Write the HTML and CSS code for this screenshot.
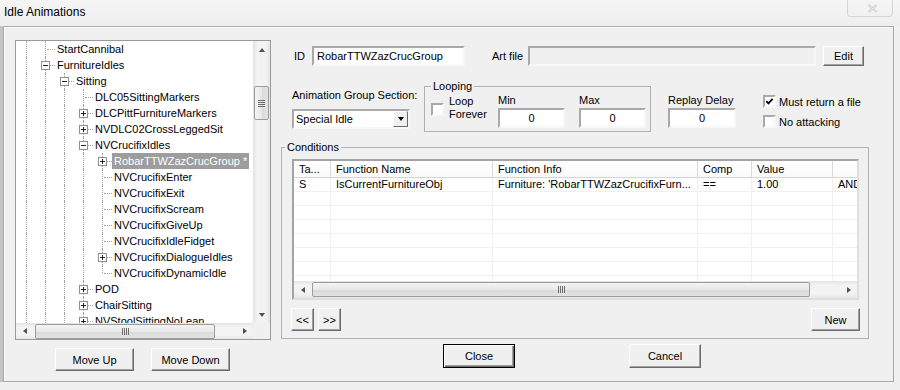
FILE: index.html
```html
<!DOCTYPE html>
<html lang="en">
<head>
    <meta charset="UTF-8">
    <title>Idle Animations</title>
    <link rel="stylesheet" href="styles.css">
</head>
<body>

<div class="titlebar">
    <span class="title">Idle Animations</span>
    <span class="close-x">
        <svg width="11" height="9" viewBox="0 0 11 9"><path d="M1.5 1 9.5 8M9.5 1 1.5 8" stroke="#c9c9c9" stroke-width="2.2" fill="none"/><path d="M1.5 1 9.5 8M9.5 1 1.5 8" stroke="#f7f7f7" stroke-width="0.8" fill="none"/></svg>
    </span>
</div>

<div class="frame">
    <div class="left">
        <div class="tree">
            <div class="tree-view">
                <div class="node"><i class="g l"></i><i class="g t"></i><span class="lbl">StartCannibal</span></div>
                <div class="node"><i class="g l"></i><i class="g t"><b class="box"></b></i><span class="lbl">FurnitureIdles</span></div>
                <div class="node"><i class="g l"></i><i class="g l"></i><i class="g t"><b class="box"></b></i><span class="lbl">Sitting</span></div>
                <div class="node"><i class="g l"></i><i class="g l"></i><i class="g l"></i><i class="g t"></i><span class="lbl">DLC05SittingMarkers</span></div>
                <div class="node"><i class="g l"></i><i class="g l"></i><i class="g l"></i><i class="g t"><b class="box plus"></b></i><span class="lbl">DLCPittFurnitureMarkers</span></div>
                <div class="node"><i class="g l"></i><i class="g l"></i><i class="g l"></i><i class="g t"><b class="box plus"></b></i><span class="lbl">NVDLC02CrossLeggedSit</span></div>
                <div class="node"><i class="g l"></i><i class="g l"></i><i class="g l"></i><i class="g t"><b class="box"></b></i><span class="lbl">NVCrucifixIdles</span></div>
                <div class="node sel"><i class="g l"></i><i class="g l"></i><i class="g l"></i><i class="g l"></i><i class="g t"><b class="box plus"></b></i><span class="lbl">RobarTTWZazCrucGroup *</span></div>
                <div class="node"><i class="g l"></i><i class="g l"></i><i class="g l"></i><i class="g l"></i><i class="g t"></i><span class="lbl">NVCrucifixEnter</span></div>
                <div class="node"><i class="g l"></i><i class="g l"></i><i class="g l"></i><i class="g l"></i><i class="g t"></i><span class="lbl">NVCrucifixExit</span></div>
                <div class="node"><i class="g l"></i><i class="g l"></i><i class="g l"></i><i class="g l"></i><i class="g t"></i><span class="lbl">NVCrucifixScream</span></div>
                <div class="node"><i class="g l"></i><i class="g l"></i><i class="g l"></i><i class="g l"></i><i class="g t"></i><span class="lbl">NVCrucifixGiveUp</span></div>
                <div class="node"><i class="g l"></i><i class="g l"></i><i class="g l"></i><i class="g l"></i><i class="g t"></i><span class="lbl">NVCrucifixIdleFidget</span></div>
                <div class="node"><i class="g l"></i><i class="g l"></i><i class="g l"></i><i class="g l"></i><i class="g t"><b class="box plus"></b></i><span class="lbl">NVCrucifixDialogueIdles</span></div>
                <div class="node"><i class="g l"></i><i class="g l"></i><i class="g l"></i><i class="g l"></i><i class="g e"></i><span class="lbl">NVCrucifixDynamicIdle</span></div>
                <div class="node"><i class="g l"></i><i class="g l"></i><i class="g l"></i><i class="g t"><b class="box plus"></b></i><span class="lbl">POD</span></div>
                <div class="node"><i class="g l"></i><i class="g l"></i><i class="g l"></i><i class="g t"><b class="box plus"></b></i><span class="lbl">ChairSitting</span></div>
                <div class="node"><i class="g l"></i><i class="g l"></i><i class="g l"></i><i class="g t"><b class="box plus"></b></i><span class="lbl">NVStoolSittingNoLean</span></div>
            </div>
            <div class="vscroll">
                <span class="sb-arrow"><i class="tri-up"></i></span>
                <span class="vthumb"><i class="vgrip"></i></span>
                <span class="sb-arrow end"><i class="tri-down"></i></span>
            </div>
            <div class="hscroll">
                <span class="sb-arrow"><i class="tri-left"></i></span>
                <span class="hthumb tree-thumb"><i class="hgrip"></i></span>
                <span class="sb-arrow end"><i class="tri-right"></i></span>
            </div>
            <div class="corner"></div>
        </div>
        <div class="move-row">
            <button class="btn b-move">Move Up</button>
            <button class="btn b-move">Move Down</button>
        </div>
    </div>

    <div class="right">
        <div class="row-id">
            <span class="lab-id">ID</span>
            <div class="field w-id">RobarTTWZazCrucGroup</div>
            <span class="lab-art">Art file</span>
            <div class="field w-art off"></div>
            <button class="btn b-edit">Edit</button>
        </div>

        <div class="row-opts">
            <div class="agroup">
                <div class="cap">Animation Group Section:</div>
                <div class="field select"><span>Special Idle</span><i class="drop"></i></div>
            </div>
            <fieldset class="group looping">
                <legend>Looping</legend>
                <div class="loop-body">
                    <div class="loop-check"><span class="cb"></span><span class="two">Loop<br>Forever</span></div>
                    <div class="spin"><div class="cap">Min</div><div class="field num">0</div></div>
                    <div class="spin gap"><div class="cap">Max</div><div class="field num">0</div></div>
                </div>
            </fieldset>
            <div class="replay">
                <div class="cap">Replay Delay</div>
                <div class="field num">0</div>
            </div>
            <div class="flags">
                <div class="flag"><span class="cb"><svg width="9" height="9" viewBox="0 0 9 9"><path d="M1.3 4.2 3.4 6.4 7.6 1.8" fill="none" stroke="#000" stroke-width="1.9"/></svg></span>Must return a file</div>
                <div class="flag"><span class="cb"></span>No attacking</div>
            </div>
        </div>

        <fieldset class="group conditions">
            <legend>Conditions</legend>
            <div class="cond-body">
                <div class="list">
                    <div class="lv-view">
                        <div class="lv-head">
                            <span>Ta...</span><span>Function Name</span><span>Function Info</span><span>Comp</span><span>Value</span><span></span>
                        </div>
                        <div class="lv-row">
                            <span>S</span><span>IsCurrentFurnitureObj</span><span>Furniture: 'RobarTTWZazCrucifixFurn...</span><span>==</span><span>1.00</span><span>AND</span>
                        </div>
                        <div class="lv-row"><span></span><span></span><span></span><span></span><span></span><span></span></div>
                        <div class="lv-row"><span></span><span></span><span></span><span></span><span></span><span></span></div>
                        <div class="lv-row"><span></span><span></span><span></span><span></span><span></span><span></span></div>
                        <div class="lv-row"><span></span><span></span><span></span><span></span><span></span><span></span></div>
                        <div class="lv-row"><span></span><span></span><span></span><span></span><span></span><span></span></div>
                        <div class="lv-row"><span></span><span></span><span></span><span></span><span></span><span></span></div>
                        <div class="lv-row"><span></span><span></span><span></span><span></span><span></span><span></span></div>
                    </div>
                    <div class="hscroll">
                        <span class="sb-arrow"><i class="tri-left"></i></span>
                        <span class="hthumb list-thumb"><i class="hgrip"></i></span>
                        <span class="sb-arrow end"><i class="tri-right"></i></span>
                    </div>
                </div>
                <div class="cond-btns">
                    <button class="btn b-nav first">&lt;&lt;</button>
                    <button class="btn b-nav">&gt;&gt;</button>
                    <button class="btn b-new">New</button>
                </div>
            </div>
        </fieldset>

        <div class="row-close">
            <button class="btn default b-wide">Close</button>
            <button class="btn b-wide">Cancel</button>
        </div>
    </div>
</div>

</body>
</html>
```

FILE: styles.css
```css
* {
    box-sizing: border-box;
}
body {
    margin: 0;
    width: 900px;
    height: 390px;
    overflow: hidden;
    background-color: #f0f0f0;
    font-family: "Liberation Sans", Arial, sans-serif;
    font-size: 11px;
    color: #000;
}

/* title bar */
.titlebar {
    height: 26px;
    display: flex;
    justify-content: space-between;
    align-items: flex-start;
    background: linear-gradient(#f5f5f5, #eeeeee);
}
.title {
    font-size: 12px;
    line-height: 16px;
    padding: 4px 0 0 4px;
}
.close-x {
    width: 46px;
    height: 17px;
    margin-right: 7px;
    border: 1px solid #d6d6d6;
    border-top: none;
    border-radius: 0 0 4px 4px;
    display: flex;
    align-items: center;
    justify-content: center;
    padding-left: 4px;
}

/* main frame */
.frame {
    margin-left: 3px;
    width: 891px;
    height: 356px;
    border: 1px solid #a9a9a9;
    box-shadow: -3px 0 0 #c4c4c4, inset 1px 1px #fff;
    display: flex;
}
.left {
    width: 276px;
    flex-shrink: 0;
    padding: 13px 0 0 11px;
}
.right {
    flex: 1;
    display: flex;
    flex-direction: column;
}

/* tree view */
.tree {
    width: 256px;
    height: 300px;
    border: 1px solid #9a9a9a;
    background: #fff;
    display: grid;
    grid-template-columns: 1fr 17px;
    grid-template-rows: 1fr 16px;
}
.tree-view {
    overflow: hidden;
    padding-left: 1px;
}
.node {
    display: flex;
    height: 16px;
    line-height: 16px;
    white-space: nowrap;
}
.g {
    display: block;
    position: relative;
    width: 19px;
    height: 16px;
    flex-shrink: 0;
}
.g.l::before, .g.t::before, .g.e::before {
    content: "";
    position: absolute;
    left: 9px;
    top: 0;
    bottom: 0;
    border-left: 1px dotted #a0a0a0;
}
.g.e::before {
    bottom: 8px;
}
.g.t::after, .g.e::after {
    content: "";
    position: absolute;
    left: 11px;
    right: 0;
    top: 8px;
    border-top: 1px dotted #a0a0a0;
}
.box {
    position: absolute;
    left: 5px;
    top: 4px;
    width: 9px;
    height: 9px;
    border: 1px solid #8f8f8f;
    background: #fff;
    z-index: 1;
}
.box::before {
    content: "";
    position: absolute;
    left: 1px;
    top: 3px;
    width: 5px;
    height: 1px;
    background: #222;
}
.box.plus::after {
    content: "";
    position: absolute;
    left: 3px;
    top: 1px;
    width: 1px;
    height: 5px;
    background: #222;
}
.lbl {
    padding: 0 2px;
}
.node.sel .lbl {
    background: #9d9d9d;
    color: #fff;
}

/* scroll bars */
.vscroll {
    display: flex;
    flex-direction: column;
    align-items: center;
    background: linear-gradient(90deg, #e3e3e3, #f3f3f3 25%, #f3f3f3 75%, #e6e6e6);
}
.hscroll {
    display: flex;
    align-items: center;
    background: linear-gradient(#e3e3e3, #f3f3f3 25%, #f3f3f3 75%, #e6e6e6);
}
.corner {
    background: #f0f0f0;
}
.sb-arrow {
    width: 17px;
    height: 17px;
    flex-shrink: 0;
    display: flex;
    align-items: center;
    justify-content: center;
}
.vscroll .sb-arrow.end {
    margin-top: auto;
}
.hscroll .sb-arrow.end {
    margin-left: auto;
}
.tri-up, .tri-down, .tri-left, .tri-right {
    display: block;
    width: 0;
    height: 0;
}
.tri-up {
    border-left: 3px solid transparent;
    border-right: 3px solid transparent;
    border-bottom: 4px solid #505050;
}
.tri-down {
    border-left: 3px solid transparent;
    border-right: 3px solid transparent;
    border-top: 4px solid #505050;
}
.tri-left {
    border-top: 3px solid transparent;
    border-bottom: 3px solid transparent;
    border-right: 4px solid #505050;
}
.tri-right {
    border-top: 3px solid transparent;
    border-bottom: 3px solid transparent;
    border-left: 4px solid #505050;
}
.vthumb {
    width: 15px;
    height: 34px;
    margin-top: 28px;
    border: 1px solid #9b9b9b;
    border-radius: 2px;
    background: linear-gradient(90deg, #f4f4f4, #e8e8e8 50%, #dadada 51%, #e2e2e2);
    display: flex;
    align-items: center;
    justify-content: center;
}
.vgrip {
    display: block;
    width: 7px;
    height: 7px;
    background: repeating-linear-gradient(#6e6e6e 0 1px, transparent 1px 2px);
}
.hthumb {
    height: 15px;
    border: 1px solid #9b9b9b;
    border-radius: 2px;
    background: linear-gradient(#f4f4f4, #e8e8e8 50%, #dadada 51%, #e2e2e2);
    display: flex;
    align-items: center;
    justify-content: center;
}
.hgrip {
    display: block;
    width: 7px;
    height: 7px;
    background: repeating-linear-gradient(90deg, #6e6e6e 0 1px, transparent 1px 2px);
}
.tree-thumb {
    width: 180px;
    margin-left: 2px;
}
.list-thumb {
    width: 498px;
    margin-left: 1px;
}

/* buttons */
.btn {
    font: inherit;
    color: #000;
    background: #f0f0f0;
    border: 1px solid;
    border-color: #fff #6b6b6b #6b6b6b #fff;
    box-shadow: inset -1px -1px #a0a0a0;
    padding: 0;
    height: 23px;
}
.btn.default {
    border-color: #000;
    box-shadow: inset 1px 1px #fff, inset -1px -1px #6b6b6b, inset -2px -2px #a0a0a0;
}
.move-row {
    display: flex;
    gap: 17px;
    margin: 8px 0 0 40px;
}
.b-move {
    width: 79px;
}
.b-edit {
    width: 41px;
    height: 20px;
    margin-left: 7px;
}

/* inputs */
.field {
    height: 20px;
    border: 2px solid;
    border-color: #a9a9a9 #f7f7f7 #f7f7f7 #a9a9a9;
    background: #fff;
    line-height: 16px;
    padding-left: 3px;
    white-space: nowrap;
    overflow: hidden;
}
.field.off {
    background: #f0f0f0;
}
.field.num {
    text-align: center;
    padding-left: 0;
}
.cap {
    line-height: 13px;
    white-space: nowrap;
}

.row-id {
    display: flex;
    align-items: center;
    height: 20px;
    margin-top: 19px;
    padding-left: 14px;
}
.lab-id {
    width: 18px;
}
.w-id {
    width: 153px;
}
.lab-art {
    width: 36px;
    margin-left: 27px;
}
.w-art {
    width: 288px;
}

.row-opts {
    display: flex;
    align-items: flex-start;
    height: 52px;
    margin-top: 14px;
}
.agroup {
    width: 132px;
    margin-left: 12px;
}
.agroup .cap {
    padding-top: 9px;
}
.select {
    width: 118px;
    margin-top: 7px;
    display: flex;
    align-items: center;
    padding-left: 2px;
}
.drop {
    margin-left: auto;
    width: 15px;
    height: 16px;
    background: #f0f0f0;
    border: 1px solid;
    border-color: #fff #6b6b6b #6b6b6b #fff;
    display: flex;
    align-items: center;
    justify-content: center;
}
.drop::before {
    content: "";
    border-left: 3px solid transparent;
    border-right: 3px solid transparent;
    border-top: 4px solid #000;
}

/* group boxes */
.group {
    margin: 0;
    min-width: 0;
    border: 1px solid #b0b0b0;
}
.group legend {
    line-height: 13px;
    padding: 0 2px;
}
.looping {
    width: 227px;
    height: 52px;
    padding: 0 4px 0 6px;
}
.loop-body {
    display: flex;
    align-items: flex-start;
}
.loop-check {
    width: 67px;
    display: flex;
    align-items: flex-start;
}
.loop-check .cb {
    margin-top: 10px;
}
.two {
    margin: 2px 0 0 5px;
    line-height: 13px;
}
.spin {
    width: 67px;
}
.spin.gap {
    margin-left: 14px;
}
.spin .cap, .replay .cap {
    margin-top: 1px;
}
.spin .field, .replay .field {
    margin-top: 1px;
}
.replay {
    width: 68px;
    margin-left: 17px;
    padding-top: 13px;
}
.flags {
    margin-left: 27px;
    padding-top: 15px;
}
.flag {
    display: flex;
    align-items: center;
    height: 13px;
    margin-bottom: 7px;
    white-space: nowrap;
}
.cb {
    width: 13px;
    height: 13px;
    flex-shrink: 0;
    border: 2px solid;
    border-color: #a9a9a9 #f7f7f7 #f7f7f7 #a9a9a9;
    background: #fff;
    display: flex;
}
.flag .cb {
    margin-right: 3px;
}

/* conditions */
.conditions {
    width: 588px;
    height: 198px;
    margin: 9px 0 0 1px;
    padding: 0 0 0 3px;
}
.cond-body {
    margin-left: 7px;
    padding-top: 5px;
}
.list {
    width: 567px;
    height: 141px;
    border: 2px solid;
    border-color: #a3a3a3 #dedede #dedede #a3a3a3;
    background: #fff;
    display: grid;
    grid-template-rows: 1fr 17px;
    overflow: hidden;
}
.lv-view {
    overflow: hidden;
}
.lv-head, .lv-row {
    display: grid;
    grid-template-columns: 37px 162px 205px 54px 81px 120px;
    white-space: nowrap;
}
.lv-head {
    height: 17px;
}
.lv-head span {
    line-height: 16px;
    padding-left: 5px;
    border-right: 1px solid #d9d9d9;
    border-bottom: 1px solid #d5d5d5;
    background: linear-gradient(#fff, #fafafa);
}
.lv-row {
    height: 14px;
}
.lv-row span {
    line-height: 13px;
    padding-left: 5px;
    border-right: 1px solid #f0f0f0;
    border-bottom: 1px solid #f0f0f0;
    overflow: hidden;
}
.cond-btns {
    width: 567px;
    display: flex;
    gap: 4px;
    margin-top: 8px;
}
.b-nav {
    width: 23px;
}
.b-nav.first {
    margin-left: -1px;
}
.b-new {
    width: 49px;
    margin-left: auto;
    margin-right: -1px;
}

.row-close {
    display: flex;
    gap: 114px;
    margin-top: 5px;
    padding-left: 163px;
}
.b-wide {
    width: 72px;
    height: 24px;
}
```
